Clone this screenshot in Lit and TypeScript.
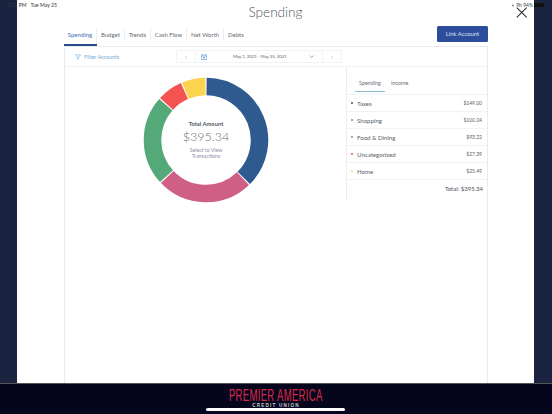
import { LitElement, html, css, svg } from "lit";
import { customElement } from "lit/decorators.js";

const CATS = [
  { name: "Taxes", amount: 149.0, color: "#2f5a8f", label: "$149.00" },
  { name: "Shopping", amount: 100.24, color: "#cf5f85", label: "$100.24" },
  { name: "Food & Dining", amount: 93.22, color: "#55a878", label: "$93.22" },
  { name: "Uncategorized", amount: 27.39, color: "#f55252", label: "$27.39" },
  { name: "Home", amount: 25.49, color: "#fdd44f", label: "$25.49" },
];
const TABS = ["Spending", "Budget", "Trends", "Cash Flow", "Net Worth", "Debts"];

function arc(cx: number, cy: number, r: number, a0: number, a1: number) {
  const p = (a: number) => {
    const t = ((a - 90) * Math.PI) / 180;
    return `${(cx + r * Math.cos(t)).toFixed(2)} ${(cy + r * Math.sin(t)).toFixed(2)}`;
  };
  return `M${p(a0)}A${r} ${r} 0 ${a1 - a0 > 180 ? 1 : 0} 1 ${p(a1)}`;
}

@customElement("app-root")
export class AppRoot extends LitElement {
  static styles = css`
    :host {
      display: flex;
      flex-direction: column;
      position: relative;
      width: 552px;
      height: 414px;
      overflow: hidden;
      background: #fff;
      font-family: Lato, "Open Sans", sans-serif;
      color: #4a4f57;
    }
    .main { display: flex; height: 383px; }
    .side { background: #1a2340; }
    .side.l { width: 17px; }
    .side.r { width: 18px; }
    .modal {
      flex: 1;
      display: flex;
      flex-direction: column;
      padding: 0 46px 0 47px;
      min-width: 0;
    }
    .title {
      height: 26px;
      margin: 0 -46px 0 -47px;
      padding-top: 3px;
      box-sizing: border-box;
      text-align: center;
      font-size: 13.6px;
      line-height: 19px;
      font-weight: 300;
      color: #55595f;
    }
    .tabbar { display: flex; align-items: flex-start; height: 20px; justify-content: space-between; }
    .tabs { display: flex; height: 20px; }
    .tab {
      padding: 0 4px 0 3.8px;
      height: 13px;
      font-size: 6px;
      line-height: 13px;
      color: #666b73;
      border-right: 1px solid #eceef0;
      margin-top: 2px;
    }
    .tab:last-child { border-right: 0; }
    .tab.on {
      color: #3f6fb0;
      height: 17px;
      box-sizing: border-box;
      position: relative;
    }
    .tab.on::after {
      content: "";
      position: absolute;
      left: 0;
      right: -1px;
      bottom: -1px;
      height: 2px;
      background: #2a4a8e;
    }
    .link {
      width: 51px;
      height: 16px;
      box-sizing: border-box;
      background: #2c4c9c;
      color: #dfe5f2;
      border-radius: 1.5px;
      font-size: 5.9px;
      line-height: 16px;
      text-align: center;
    }
    .card {
      flex: 1;
      display: flex;
      flex-direction: column;
      border: 1px solid #e9ebee;
      border-width: 1px 1px 0 1px;
    }
    .toolbar {
      height: 20px;
      flex: none;
      display: flex;
      align-items: center;
      border-bottom: 1px solid #f1f2f4;
      box-sizing: border-box;
    }
    .filter {
      width: 111px;
      padding-left: 10px;
      box-sizing: border-box;
      display: flex;
      align-items: center;
      gap: 3px;
      font-size: 5.4px;
      color: #74a9d8;
    }
    .pager {
      display: flex;
      align-items: center;
      height: 13px;
      width: 166px;
      border: 1px solid #f2f3f5;
      box-sizing: border-box;
      font-size: 4.3px;
      color: #5c6068;
    }
    .cell { display: flex; align-items: center; justify-content: center; height: 100%; }
    .cell.prev { width: 18px; border-right: 1px solid #f2f3f5; color: #888; font-size: 6px; }
    .cell.cal { width: 16px; }
    .cell.date { flex: 1; justify-content: flex-start; padding-left: 21px; white-space: nowrap; }
    .cell.chev { width: 22px; }
    .cell.next { width: 18px; border-left: 1px solid #f2f3f5; color: #888; font-size: 6px; }
    .body { flex: 1; display: flex; min-height: 0; }
    .chart {
      flex: 1;
      position: relative;
      padding: 7px 0 0 75px;
      box-sizing: border-box;
    }
    .donut { display: block; width: 132px; height: 132px; }
    .center {
      position: absolute;
      left: 75px;
      top: 7px;
      width: 132px;
      height: 132px;
      display: flex;
      flex-direction: column;
      align-items: center;
      padding-top: 46px;
      box-sizing: border-box;
      text-align: center;
    }
    .center .t { font-size: 5.8px; line-height: 8px; font-weight: 700; color: #555962; }
    .center .v { font-size: 12.5px; line-height: 16px; margin-top: 1px; color: #6c7076; font-weight: 300; }
    .center .s { font-size: 5.2px; line-height: 6.3px; margin-top: 2px; color: #8a8ea6; }
    .panel {
      width: 141px;
      height: 133px;
      border-left: 1px solid #eceef0;
      box-sizing: border-box;
      flex: none;
    }
    .ptabs { display: flex; height: 27px; padding: 12px 0 0 8px; box-sizing: border-box; }
    .ptab { font-size: 5.4px; line-height: 9px; color: #6d7179; }
    .ptab.on {
      width: 30px;
      height: 13px;
      margin-right: 6px;
      text-align: center;
      border-bottom: 1.5px solid #8cc0dc;
      box-sizing: border-box;
    }
    .row {
      height: 17px;
      display: flex;
      align-items: center;
      padding: 0 5px 0 4px;
      border-top: 1px solid #f1f2f4;
      box-sizing: border-box;
      font-size: 6.1px;
      color: #5c6068;
    }
    .dot { width: 2px; height: 2px; border-radius: 50%; margin-right: 4px; flex: none; }
    .name { flex: 1; }
    .amt { font-size: 5px; color: #5c6068; }
    .total {
      height: 19px;
      border-top: 1px solid #f1f2f4;
      box-sizing: border-box;
      text-align: right;
      padding-right: 4px;
      font-size: 6px;
      line-height: 17px;
      color: #4e525a;
    }
    .footer {
      height: 31px;
      background: #05051d;
      border-top: 1px solid #555;
      box-sizing: border-box;
      display: flex;
      flex-direction: column;
      align-items: center;
    }
    .brand {
      font-family: "Liberation Sans", sans-serif;
      font-size: 16.5px;
      line-height: 15px;
      margin-top: 4px;
      color: #d92a48;
      letter-spacing: 0.5px;
      transform: scaleX(0.58);
      white-space: nowrap;
    }
    .brand2 {
      font-family: "Liberation Sans", sans-serif;
      font-size: 4.6px;
      line-height: 5px;
      font-weight: 700;
      color: #c9c9cf;
      letter-spacing: 1.2px;
      white-space: nowrap;
    }
    .home {
      position: absolute;
      left: 206px;
      top: 408px;
      width: 139px;
      height: 2.5px;
      border-radius: 2px;
      background: #fff;
    }
    .status {
      position: absolute;
      top: 1px;
      font-size: 5.2px;
      line-height: 8px;
      color: #33363c;
      white-space: nowrap;
    }
    .status.l { left: 7px; }
    .status.r { right: 8px; display: flex; align-items: center; gap: 1px; font-size: 5px; }
    .batt { display: inline-block; width: 10px; height: 3.5px; background: #111; }
    .close { position: absolute; left: 515.5px; top: 7px; width: 11.5px; height: 11px; }
  `;

  render() {
    const total = CATS.reduce((s, c) => s + c.amount, 0);
    let a = 0;
    const segs = CATS.map((c) => {
      const a0 = a;
      a += (c.amount / total) * 360;
      return svg`<path d=${arc(66, 66, 53.5, a0 + 0.6, a - 0.6)} stroke=${c.color} stroke-width="17.5" fill="none"></path>`;
    });
    return html`
      <div class="main">
        <div class="side l"></div>
        <div class="modal">
          <div class="title">Spending</div>
          <div class="tabbar">
            <div class="tabs">
              ${TABS.map((t, i) => html`<div class="tab ${i === 0 ? "on" : ""}">${t}</div>`)}
            </div>
            <div class="link">Link Account</div>
          </div>
          <div class="card">
            <div class="toolbar">
              <div class="filter">
                <svg width="6" height="6" viewBox="0 0 6 6"><path d="M.4.8h5.2L3.6 3.2v2.2L2.4 4.6V3.2z" fill="none" stroke="#74a9d8" stroke-width=".6"></path></svg>
                Filter Accounts
              </div>
              <div class="pager">
                <div class="cell prev">‹</div>
                <div class="cell cal">
                  <svg width="6" height="6" viewBox="0 0 6 6"><rect x=".4" y="1" width="5.2" height="4.6" fill="none" stroke="#74a9d8" stroke-width=".7"></rect><path d="M.4 2.2h5.2M1.6.2v1M4.4.2v1" stroke="#74a9d8" stroke-width=".6"></path><rect x="2" y="3" width="2" height="1.4" fill="#74a9d8"></rect></svg>
                </div>
                <div class="cell date">May 1, 2021 - May 25, 2021</div>
                <div class="cell chev">
                  <svg width="5" height="3" viewBox="0 0 5 3"><path d="M.5.5l2 2 2-2" fill="none" stroke="#777" stroke-width=".6"></path></svg>
                </div>
                <div class="cell next">›</div>
              </div>
            </div>
            <div class="body">
              <div class="chart">
                <svg class="donut" viewBox="0 0 132 132">${segs}</svg>
                <div class="center">
                  <div class="t">Total Amount</div>
                  <div class="v">$395.34</div>
                  <div class="s">Select to View<br />Transactions</div>
                </div>
              </div>
              <div class="panel">
                <div class="ptabs">
                  <div class="ptab on">Spending</div>
                  <div class="ptab">Income</div>
                </div>
                ${CATS.map(
                  (c) => html`<div class="row">
                    <span class="dot" style="background:${c.color}"></span>
                    <span class="name">${c.name}</span>
                    <span class="amt">${c.label}</span>
                  </div>`
                )}
                <div class="total">Total: $395.34</div>
              </div>
            </div>
          </div>
        </div>
        <div class="side r"></div>
      </div>
      <div class="footer">
        <div class="brand">PREMIER AMERICA</div>
        <div class="brand2">CREDIT UNION</div>
      </div>
      <div class="home"></div>
      <div class="status l">3:21 PM&nbsp;&nbsp; Tue May 25</div>
      <div class="status r">◐ 9h 94% <span class="batt"></span></div>
      <svg class="close" viewBox="0 0 12 12"><path d="M.6.6l10.8 10.8M11.4.6L.6 11.4" stroke="#222" stroke-width="1.1"></path></svg>
    `;
  }
}
